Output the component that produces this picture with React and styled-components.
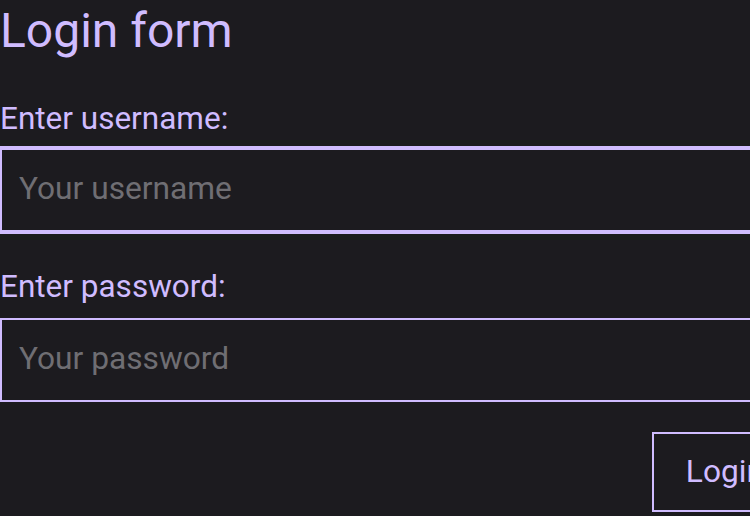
import React from "react";
import styled, { createGlobalStyle } from "styled-components";

const GlobalStyle = createGlobalStyle`
  html, body {
    margin: 0;
    padding: 0;
    background: #1c1b1f;
    overflow: hidden;
  }
  body {
    font-family: Roboto, "Noto Sans", sans-serif;
    color: #d0bcff;
  }
`;

const Page = styled.div`
  width: 800px;
  padding-top: 3px;
`;

const Title = styled.h1`
  margin: 0;
  font-size: 48px;
  font-weight: 400;
  line-height: 56px;
  color: #d0bcff;
`;

const Form = styled.form`
  display: flex;
  flex-direction: column;
  margin-top: 41px;
`;

const Field = styled.div`
  display: flex;
  flex-direction: column;
  gap: ${(p) => p.$gap}px;
  margin-bottom: ${(p) => p.$after}px;
`;

const Label = styled.label`
  font-size: 31.5px;
  line-height: 38px;
  color: #d0bcff;
`;

const Input = styled.input`
  box-sizing: border-box;
  width: 100%;
  height: 84px;
  margin: 0;
  padding: 19px 16px 23px 17px;
  font-family: Roboto, "Noto Sans", sans-serif;
  font-size: 31.7px;
  line-height: 38px;
  color: #e6e1e5;
  background: #1c1b1f;
  border: 2px solid #d0bcff;
  border-radius: 0;
  outline: ${(p) => (p.$focused ? "2px solid #d0bcff" : "none")};

  &::placeholder {
    color: #6f6e73;
  }
`;

const Actions = styled.div`
  display: flex;
  justify-content: flex-end;
`;

const Button = styled.button`
  font-family: Roboto, "Noto Sans", sans-serif;
  font-size: 31.7px;
  line-height: 38px;
  padding: 19px 34px 19px 32px;
  color: #d0bcff;
  background: transparent;
  border: 2px solid #d0bcff;
  border-radius: 0;
  cursor: pointer;
`;

export default function App() {
  return (
    <>
      <GlobalStyle />
      <Page>
        <Title>Login form</Title>
        <Form onSubmit={(e) => e.preventDefault()}>
          <Field $gap={10} $after={36}>
            <Label htmlFor="username">Enter username:</Label>
            <Input id="username" placeholder="Your username" $focused />
          </Field>
          <Field $gap={12} $after={30}>
            <Label htmlFor="password">Enter password:</Label>
            <Input id="password" type="password" placeholder="Your password" />
          </Field>
          <Actions>
            <Button type="submit">Login</Button>
          </Actions>
        </Form>
      </Page>
    </>
  );
}
